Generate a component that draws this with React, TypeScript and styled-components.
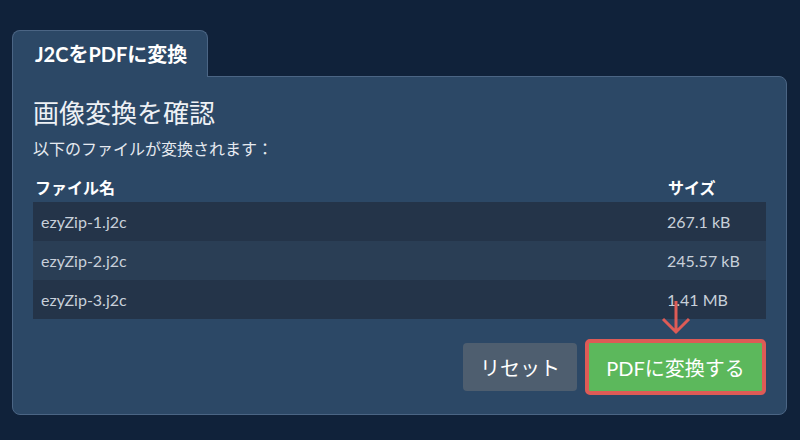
import React from "react";
import styled, { createGlobalStyle } from "styled-components";

const Global = createGlobalStyle`
  html, body { margin: 0; padding: 0; background: #10223a; }
  body {
    font-family: Lato, "Noto Sans CJK JP", sans-serif;
    color: #e9edf2;
    width: 800px;
    height: 440px;
    overflow: hidden;
  }
`;

const Page = styled.div`
  padding: 30px 13px 0 12px;
`;

const Tab = styled.div`
  position: relative;
  z-index: 1;
  box-sizing: border-box;
  width: 196px;
  height: 47px;
  margin-bottom: -1px;
  padding: 10px 0 0 22px;
  background: #2c4866;
  border: 1px solid #4b6584;
  border-bottom: none;
  border-radius: 8px 8px 0 0;
  font-size: 20px;
  line-height: 26px;
  font-weight: 700;
  color: #ffffff;
`;

const Panel = styled.div`
  box-sizing: border-box;
  background: #2c4866;
  border: 1px solid #4b6584;
  border-radius: 0 8px 8px 8px;
  padding: 20px 20px 19px 20px;
`;

const Heading = styled.h2`
  margin: 0;
  font-size: 26px;
  font-weight: 400;
  line-height: 32px;
  color: #eef1f5;
`;

const Sub = styled.p`
  margin: 9px 0 0 0;
  font-size: 16px;
  line-height: 22px;
  color: #e6eaf0;
`;

const Table = styled.div`
  margin-top: 18px;
  display: grid;
  grid-template-columns: 626px 1fr;
`;

const Head = styled.div<{ $pad: number }>`
  height: 24px;
  padding-left: ${(p) => p.$pad}px;
  font-size: 16px;
  font-weight: 700;
  color: #ffffff;
  line-height: 20px;
`;

const Cell = styled.div<{ $alt: boolean }>`
  height: 39px;
  display: flex;
  align-items: center;
  padding-left: 8px;
  background: ${(p) => (p.$alt ? "#2a3e55" : "#243449")};
  font-size: 16px;
  color: #c8d0da;
`;

const Actions = styled.div`
  margin-top: 20px;
  display: flex;
  justify-content: flex-end;
  align-items: center;
  gap: 8px;
`;

const ResetButton = styled.button`
  width: 114px;
  height: 48px;
  border: none;
  border-radius: 4px;
  background: #4e5e6f;
  color: #ffffff;
  font-family: Lato, "Noto Sans CJK JP", sans-serif;
  font-size: 20px;
  cursor: pointer;
`;

const ConvertWrap = styled.div`
  position: relative;
`;

const ConvertButton = styled.button`
  box-sizing: border-box;
  width: 181px;
  height: 56px;
  border: 4px solid #de5b56;
  border-radius: 5px;
  background: #5cb85c;
  color: #ffffff;
  font-family: Lato, "Noto Sans CJK JP", sans-serif;
  font-size: 20px;
  cursor: pointer;
`;

const Arrow = styled.svg`
  position: absolute;
  left: 50%;
  bottom: 100%;
  margin-bottom: 4px;
  transform: translateX(-50%);
`;

const files = [
  { name: "ezyZip-1.j2c", size: "267.1 kB" },
  { name: "ezyZip-2.j2c", size: "245.57 kB" },
  { name: "ezyZip-3.j2c", size: "1.41 MB" },
];

export default function App() {
  return (
    <>
      <Global />
      <Page>
        <Tab>J2CをPDFに変換</Tab>
        <Panel>
          <Heading>画像変換を確認</Heading>
          <Sub>以下のファイルが変換されます：</Sub>
          <Table>
            <Head $pad={2}>ファイル名</Head>
            <Head $pad={9}>サイズ</Head>
            {files.map((f, i) => (
              <React.Fragment key={f.name}>
                <Cell $alt={i % 2 === 1}>{f.name}</Cell>
                <Cell $alt={i % 2 === 1}>{f.size}</Cell>
              </React.Fragment>
            ))}
          </Table>
          <Actions>
            <ResetButton>リセット</ResetButton>
            <ConvertWrap>
              <Arrow width="32" height="34" viewBox="0 0 32 34">
                <path
                  d="M16 0 V31 M3 18 L16 31 L29 18"
                  fill="none"
                  stroke="#de5b56"
                  strokeWidth="3"
                />
              </Arrow>
              <ConvertButton>PDFに変換する</ConvertButton>
            </ConvertWrap>
          </Actions>
        </Panel>
      </Page>
    </>
  );
}
